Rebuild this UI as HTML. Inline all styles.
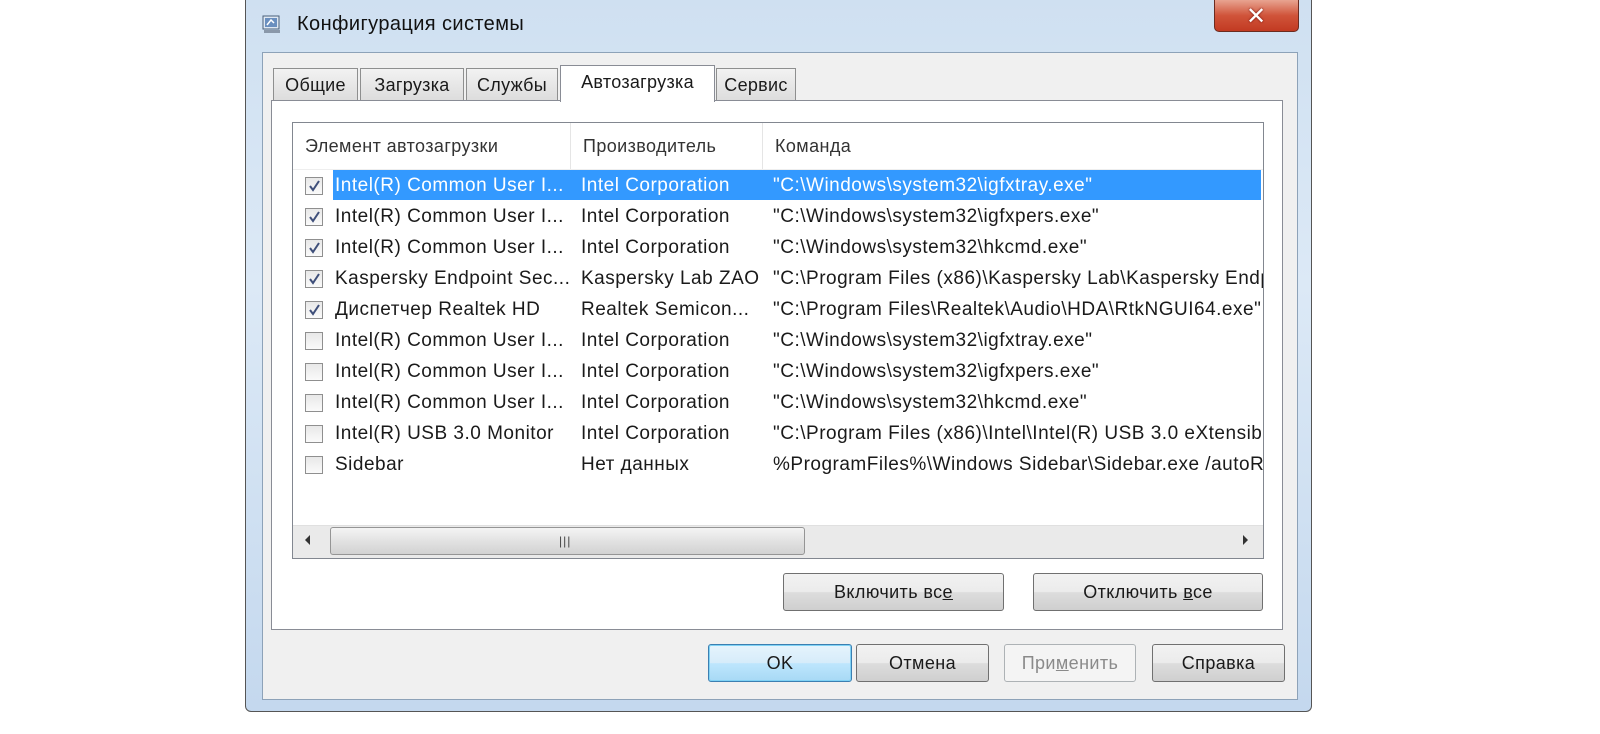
<!DOCTYPE html>
<html><head><meta charset="utf-8"><style>
*{box-sizing:border-box;margin:0;padding:0}
body{width:1600px;height:734px;background:#fff;position:relative;overflow:hidden;font-family:"Liberation Sans","DejaVu Sans",sans-serif;color:#1a1a1a}
.abs{position:absolute}
.win{left:245px;top:0;width:1067px;height:712px;border:1px solid #555;border-top:none;border-radius:0 0 6px 6px;background:linear-gradient(180deg,#cfe0f1 0%,#dce9f6 40%,#c4d8ee 100%)}
.content{left:262px;top:52px;width:1036px;height:648px;background:#f0f0f0;border:1px solid #8da2b8}
.tab{top:68px;height:33px;border:1px solid #8e8f8f;border-bottom:none;background:linear-gradient(#f2f2f2,#dcdcdc);font-size:18px;line-height:32px;text-align:center;letter-spacing:0.3px}
.tab.sel{top:65px;height:37px;background:#fff;z-index:3;border-color:#898c95}
.panel{left:271px;top:100px;width:1012px;height:530px;background:#fff;border:1px solid #898c95;z-index:2}
.list{left:292px;top:122px;width:972px;height:437px;border:1px solid #828790;background:#fff;z-index:4;overflow:hidden}
.hd{position:absolute;top:0;height:46px;font-size:18px;line-height:46px;color:#333;padding-left:12px;border-right:1px solid #e5e5e5;letter-spacing:0.4px}
.row{position:absolute;left:0;width:970px;height:31px;font-size:19px;line-height:31px;white-space:nowrap;letter-spacing:0.5px}
.row span{position:absolute;top:0}
.sel2{position:absolute;left:40px;width:928px;top:0;height:30px;background:#3399ff}
.cb{position:absolute;left:12px;top:7px;width:18px;height:18px;border:1px solid #8f8f8f;background:linear-gradient(#e8e8e8,#fafafa)}
.cb svg{position:absolute;left:1px;top:1px}
.btn{height:38px;border:1px solid #707070;border-radius:3px;background:linear-gradient(#f2f2f2 0%,#ebebeb 50%,#dddddd 51%,#cfcfcf 100%);font-size:18px;line-height:36px;text-align:center;z-index:5;letter-spacing:0.4px}
</style></head><body>
<div class="abs win"></div>
<svg class="abs" style="left:261px;top:14px" width="22" height="22" viewBox="0 0 22 22"><rect x="2" y="2" width="16" height="13" fill="#dfe8f3" stroke="#4a5f7a"/><rect x="4" y="4" width="12" height="9" fill="#6a8fbf"/><path d="M6 11l4-5 3 3" stroke="#fff" stroke-width="1.5" fill="none"/><rect x="3" y="16" width="16" height="3" fill="#8a98aa"/></svg>
<div class="abs" style="left:297px;top:13px;font-size:20px;color:#111;letter-spacing:0.4px">Конфигурация системы</div>
<div class="abs" style="left:1214px;top:0;width:85px;height:32px;border:1px solid #6b2b20;border-top:none;border-radius:0 0 5px 5px;background:linear-gradient(#e8a491 0%,#d0543a 50%,#c23a22 100%)"></div>
<div class="abs" style="left:1246px;top:2px;color:#fff;font-size:24px;font-weight:bold;text-shadow:0 0 2px #600">✕</div>
<div class="abs content"></div>
<div class="abs tab" style="left:273px;width:85px">Общие</div>
<div class="abs tab" style="left:360px;width:104px">Загрузка</div>
<div class="abs tab" style="left:466px;width:92px">Службы</div>
<div class="abs tab sel" style="left:560px;width:155px">Автозагрузка</div>
<div class="abs tab" style="left:716px;width:80px">Сервис</div>
<div class="abs panel"></div>
<div class="abs list">
 <div class="hd" style="left:0;width:278px">Элемент автозагрузки</div>
 <div class="hd" style="left:278px;width:192px">Производитель</div>
 <div class="hd" style="left:470px;width:500px;border-right:none">Команда</div>
 <div style="position:absolute;left:0;top:46px;width:970px;height:1px;background:#eee"></div>
 <div id="rows"></div>
 <div style="position:absolute;left:0;top:402px;width:970px;height:34px;background:#eaeaea;border-top:1px solid #e0e0e0"></div>
 <div style="position:absolute;left:12px;top:412px;width:0;height:0;border-top:5px solid transparent;border-bottom:5px solid transparent;border-right:5px solid #333"></div>
 <div style="position:absolute;left:950px;top:412px;width:0;height:0;border-top:5px solid transparent;border-bottom:5px solid transparent;border-left:5px solid #333"></div>
 <div style="position:absolute;left:37px;top:404px;width:475px;height:28px;border:1px solid #959595;border-radius:3px;background:linear-gradient(#f4f4f4,#e2e2e2 50%,#d2d2d2)"></div>
 <div style="position:absolute;left:266px;top:411px;font-size:12px;color:#444;letter-spacing:1px">|||</div>
</div>
<div class="abs btn" style="left:783px;top:573px;width:221px">Включить вс<u>е</u></div>
<div class="abs btn" style="left:1033px;top:573px;width:230px">Отключить <u>в</u>се</div>
<div class="abs btn" style="left:708px;top:644px;width:144px;border-color:#3c7fb1;background:linear-gradient(#e6f4fc,#d6ecfa 50%,#bee6fd 51%,#a7d9f5);box-shadow:inset 0 0 0 1px #7fd2f5">OK</div>
<div class="abs btn" style="left:856px;top:644px;width:133px">Отмена</div>
<div class="abs btn" style="left:1004px;top:644px;width:132px;background:#f4f4f4;border-color:#adb2b5;color:#8a8a8a">При<u>м</u>енить</div>
<div class="abs btn" style="left:1152px;top:644px;width:133px">Справка</div>
<script>
var d=[[1,"Intel(R) Common User I...","Intel Corporation","\"C:\\Windows\\system32\\igfxtray.exe\""],
[1,"Intel(R) Common User I...","Intel Corporation","\"C:\\Windows\\system32\\igfxpers.exe\""],
[1,"Intel(R) Common User I...","Intel Corporation","\"C:\\Windows\\system32\\hkcmd.exe\""],
[1,"Kaspersky Endpoint Sec...","Kaspersky Lab ZAO","\"C:\\Program Files (x86)\\Kaspersky Lab\\Kaspersky Endpoint"],
[1,"Диспетчер Realtek HD","Realtek Semicon...","\"C:\\Program Files\\Realtek\\Audio\\HDA\\RtkNGUI64.exe\" -s"],
[0,"Intel(R) Common User I...","Intel Corporation","\"C:\\Windows\\system32\\igfxtray.exe\""],
[0,"Intel(R) Common User I...","Intel Corporation","\"C:\\Windows\\system32\\igfxpers.exe\""],
[0,"Intel(R) Common User I...","Intel Corporation","\"C:\\Windows\\system32\\hkcmd.exe\""],
[0,"Intel(R) USB 3.0 Monitor","Intel Corporation","\"C:\\Program Files (x86)\\Intel\\Intel(R) USB 3.0 eXtensible"],
[0,"Sidebar","Нет данных","%ProgramFiles%\\Windows Sidebar\\Sidebar.exe /autoRun"]];
var h="";
d.forEach(function(r,i){
 var top=47+i*31;
 var chk=r[0]?'<svg width="14" height="14" viewBox="0 0 14 14"><path d="M3 7l3 4 6-9" stroke="#3f4f7a" stroke-width="2" fill="none"/></svg>':'';
 var col=i==0?'color:#fff':'';
 h+='<div class="row" style="top:'+top+'px;'+col+'">'+(i==0?'<div class="sel2"></div>':'')+'<div class="cb">'+chk+'</div><span style="left:42px">'+r[1]+'</span><span style="left:288px">'+r[2]+'</span><span style="left:480px">'+r[3]+'</span></div>';
});
document.getElementById("rows").innerHTML=h;
</script>
</body></html>
